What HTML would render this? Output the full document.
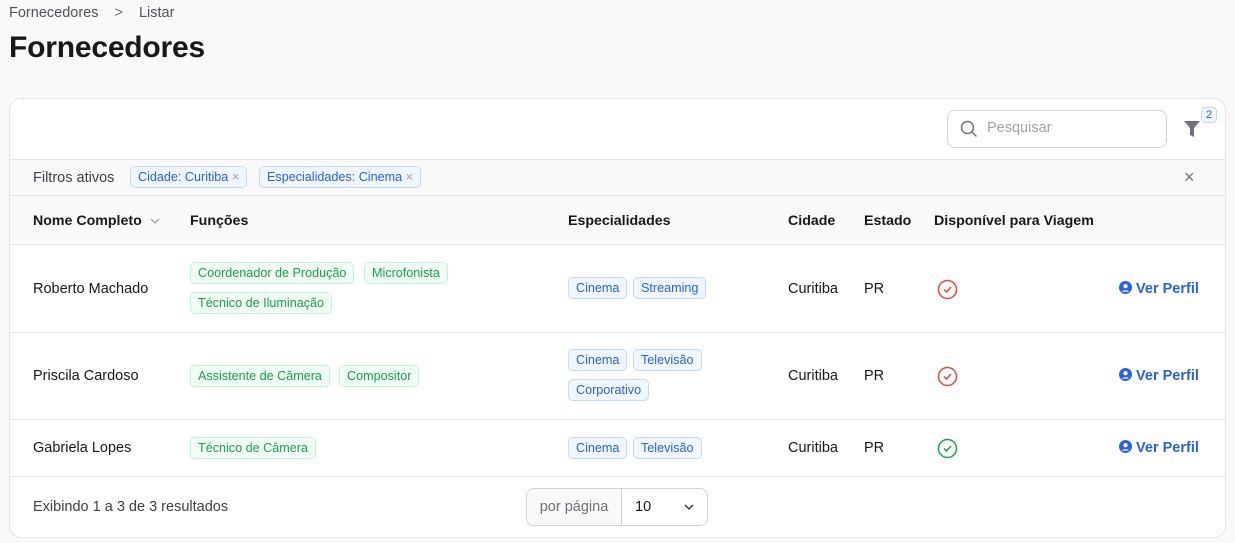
<!DOCTYPE html>
<html><head><meta charset="utf-8"><style>
*{box-sizing:border-box;margin:0;padding:0}
body{width:1235px;height:543px;background:#f9f9f9;font-family:"Liberation Sans",Arial,sans-serif;color:#18181b;position:relative;overflow:hidden;font-size:14px}
.a{position:absolute;white-space:nowrap}
.card{position:absolute;left:9px;top:98px;width:1217px;height:440px;background:#fff;border:1px solid #e4e4e7;border-radius:12px;overflow:hidden}
.band{position:absolute;left:0;width:100%}
.g{position:absolute;height:22px;line-height:20px;padding:0 7px;font-size:12.6px;border-radius:5px;color:#16a34a;background:#f0fdf4;border:1px solid #bbf7d0;white-space:nowrap}
.b{position:absolute;height:22px;line-height:20px;padding:0 7px;font-size:12.6px;border-radius:5px;color:#2563eb;background:#eff6ff;border:1px solid #bfdbfe;white-space:nowrap}
.h{font-weight:bold;font-size:14.2px}
.vp{color:#2563eb;font-weight:bold;font-size:14.5px}
</style></head><body>
<div class="a" style="left:9px;top:5px;font-size:14.5px;color:#52525b">Fornecedores <span style="margin:0 12px;color:#71717a">&gt;</span> Listar</div>
<div class="a" style="left:9px;top:31px;font-size:30px;font-weight:bold;letter-spacing:-0.2px">Fornecedores</div>
<div class="card">
 <div class="a" style="left:937px;top:11px;width:220px;height:38px;border:1px solid #d4d4d8;border-radius:8px"></div>
 <svg class="a" style="left:950px;top:21px" width="18" height="18" viewBox="0 0 18 18"><circle cx="7.5" cy="7.5" r="6" fill="none" stroke="#71717a" stroke-width="1.5"/><path d="M12 12l4.5 4.5" stroke="#71717a" stroke-width="1.5"/></svg>
 <div class="a" style="left:977px;top:21px;color:#a1a1aa;font-size:14.5px">Pesquisar</div>
 <svg class="a" style="left:1173px;top:21px" width="18" height="18" viewBox="0 0 18 18"><path d="M1 1h16l-6 7v9l-4-2V8z" fill="#71717a"/></svg>
 <div class="a" style="left:1191px;top:8px;width:16px;height:16px;background:#eff6ff;border:1px solid #bfdbfe;border-radius:4px;font-size:11px;color:#2563eb;text-align:center;line-height:14px">2</div>
 <div class="band" style="top:60px;height:37px;background:#f9f9f9;border-top:1px solid #e4e4e7;border-bottom:1px solid #e4e4e7"></div>
 <div class="a" style="left:23px;top:71px;color:#3f3f46;font-size:14.5px">Filtros ativos</div>
 <div class="b" style="left:120px;top:67px">Cidade: Curitiba <span style="color:#93a3c0">×</span></div>
 <div class="b" style="left:249px;top:67px">Especialidades: Cinema <span style="color:#93a3c0">×</span></div>
 <div class="a" style="left:1174px;top:68px;color:#71717a;font-size:18px">×</div>
 <div class="band" style="top:97px;height:49px;background:#f9f9f9;border-bottom:1px solid #e4e4e7"></div>
 <div class="a h" style="left:23px;top:114px">Nome Completo <svg width="12" height="8" viewBox="0 0 12 8" style="margin-left:3px"><path d="M2 2l4 4 4-4" fill="none" stroke="#a1a1aa" stroke-width="1.3"/></svg></div>
 <div class="a h" style="left:180px;top:114px">Funções</div>
 <div class="a h" style="left:558px;top:114px">Especialidades</div>
 <div class="a h" style="left:778px;top:114px">Cidade</div>
 <div class="a h" style="left:854px;top:114px">Estado</div>
 <div class="a h" style="left:924px;top:114px">Disponível para Viagem</div>
 <!-- row1 -->
 <div class="a" style="left:23px;top:182px;font-size:14.5px">Roberto Machado</div>
 <div class="g" style="left:180px;top:163px">Coordenador de Produção</div>
 <div class="g" style="left:354px;top:163px">Microfonista</div>
 <div class="g" style="left:180px;top:193px">Técnico de Iluminação</div>
 <div class="b" style="left:558px;top:178px">Cinema</div>
 <div class="b" style="left:623px;top:178px">Streaming</div>
 <div class="a" style="left:778px;top:182px;font-size:14.5px">Curitiba</div>
 <div class="a" style="left:854px;top:182px;font-size:14.5px">PR</div>
 <svg class="a" style="left:927px;top:180px" width="21" height="21" viewBox="0 0 21 21"><circle cx="10.5" cy="10.5" r="9" fill="none" stroke="#ef4444" stroke-width="1.5"/><path d="M7 10.5l2.5 2.5 4.5-5" fill="none" stroke="#ef4444" stroke-width="1.5"/></svg>
 <div class="a vp" style="left:1109px;top:182px"><svg width="13" height="13" viewBox="0 0 14 14" style="vertical-align:-1px"><circle cx="7" cy="7" r="7" fill="#2563eb"/><circle cx="7" cy="5.5" r="2.3" fill="#fff"/><path d="M3 11.5c1-2 7-2 8 0" fill="#fff"/></svg> Ver Perfil</div>
 <div class="band" style="top:233px;border-top:1px solid #e4e4e7"></div>
 <!-- row2 -->
 <div class="a" style="left:23px;top:269px;font-size:14.5px">Priscila Cardoso</div>
 <div class="g" style="left:180px;top:266px">Assistente de Câmera</div>
 <div class="g" style="left:329px;top:266px">Compositor</div>
 <div class="b" style="left:558px;top:250px">Cinema</div>
 <div class="b" style="left:623px;top:250px">Televisão</div>
 <div class="b" style="left:558px;top:280px">Corporativo</div>
 <div class="a" style="left:778px;top:269px;font-size:14.5px">Curitiba</div>
 <div class="a" style="left:854px;top:269px;font-size:14.5px">PR</div>
 <svg class="a" style="left:927px;top:267px" width="21" height="21" viewBox="0 0 21 21"><circle cx="10.5" cy="10.5" r="9" fill="none" stroke="#ef4444" stroke-width="1.5"/><path d="M7 10.5l2.5 2.5 4.5-5" fill="none" stroke="#ef4444" stroke-width="1.5"/></svg>
 <div class="a vp" style="left:1109px;top:269px"><svg width="13" height="13" viewBox="0 0 14 14" style="vertical-align:-1px"><circle cx="7" cy="7" r="7" fill="#2563eb"/><circle cx="7" cy="5.5" r="2.3" fill="#fff"/><path d="M3 11.5c1-2 7-2 8 0" fill="#fff"/></svg> Ver Perfil</div>
 <div class="band" style="top:320px;border-top:1px solid #e4e4e7"></div>
 <!-- row3 -->
 <div class="a" style="left:23px;top:341px;font-size:14.5px">Gabriela Lopes</div>
 <div class="g" style="left:180px;top:338px">Técnico de Câmera</div>
 <div class="b" style="left:558px;top:338px">Cinema</div>
 <div class="b" style="left:623px;top:338px">Televisão</div>
 <div class="a" style="left:778px;top:341px;font-size:14.5px">Curitiba</div>
 <div class="a" style="left:854px;top:341px;font-size:14.5px">PR</div>
 <svg class="a" style="left:927px;top:339px" width="21" height="21" viewBox="0 0 21 21"><circle cx="10.5" cy="10.5" r="9" fill="none" stroke="#16a34a" stroke-width="1.5"/><path d="M7 10.5l2.5 2.5 4.5-5" fill="none" stroke="#16a34a" stroke-width="1.5"/></svg>
 <div class="a vp" style="left:1109px;top:341px"><svg width="13" height="13" viewBox="0 0 14 14" style="vertical-align:-1px"><circle cx="7" cy="7" r="7" fill="#2563eb"/><circle cx="7" cy="5.5" r="2.3" fill="#fff"/><path d="M3 11.5c1-2 7-2 8 0" fill="#fff"/></svg> Ver Perfil</div>
 <div class="band" style="top:377px;border-top:1px solid #e4e4e7"></div>
 <div class="a" style="left:23px;top:400px;color:#3f3f46;font-size:14.5px">Exibindo 1 a 3 de 3 resultados</div>
 <div class="a" style="left:516px;top:389px;width:182px;height:38px;border:1px solid #d4d4d8;border-radius:8px;overflow:hidden">
  <div class="a" style="left:0;top:0;width:95px;height:36px;background:#f9f9f9;border-right:1px solid #d4d4d8;color:#71717a;line-height:36px;text-align:center;font-size:14.5px">por página</div>
  <div class="a" style="left:108px;top:10px;font-size:14.5px">10</div>
  <svg class="a" style="left:156px;top:14px" width="12" height="8" viewBox="0 0 12 8"><path d="M2 2l4 4 4-4" fill="none" stroke="#3f3f46" stroke-width="1.5"/></svg>
 </div>
</div>
</body></html>
